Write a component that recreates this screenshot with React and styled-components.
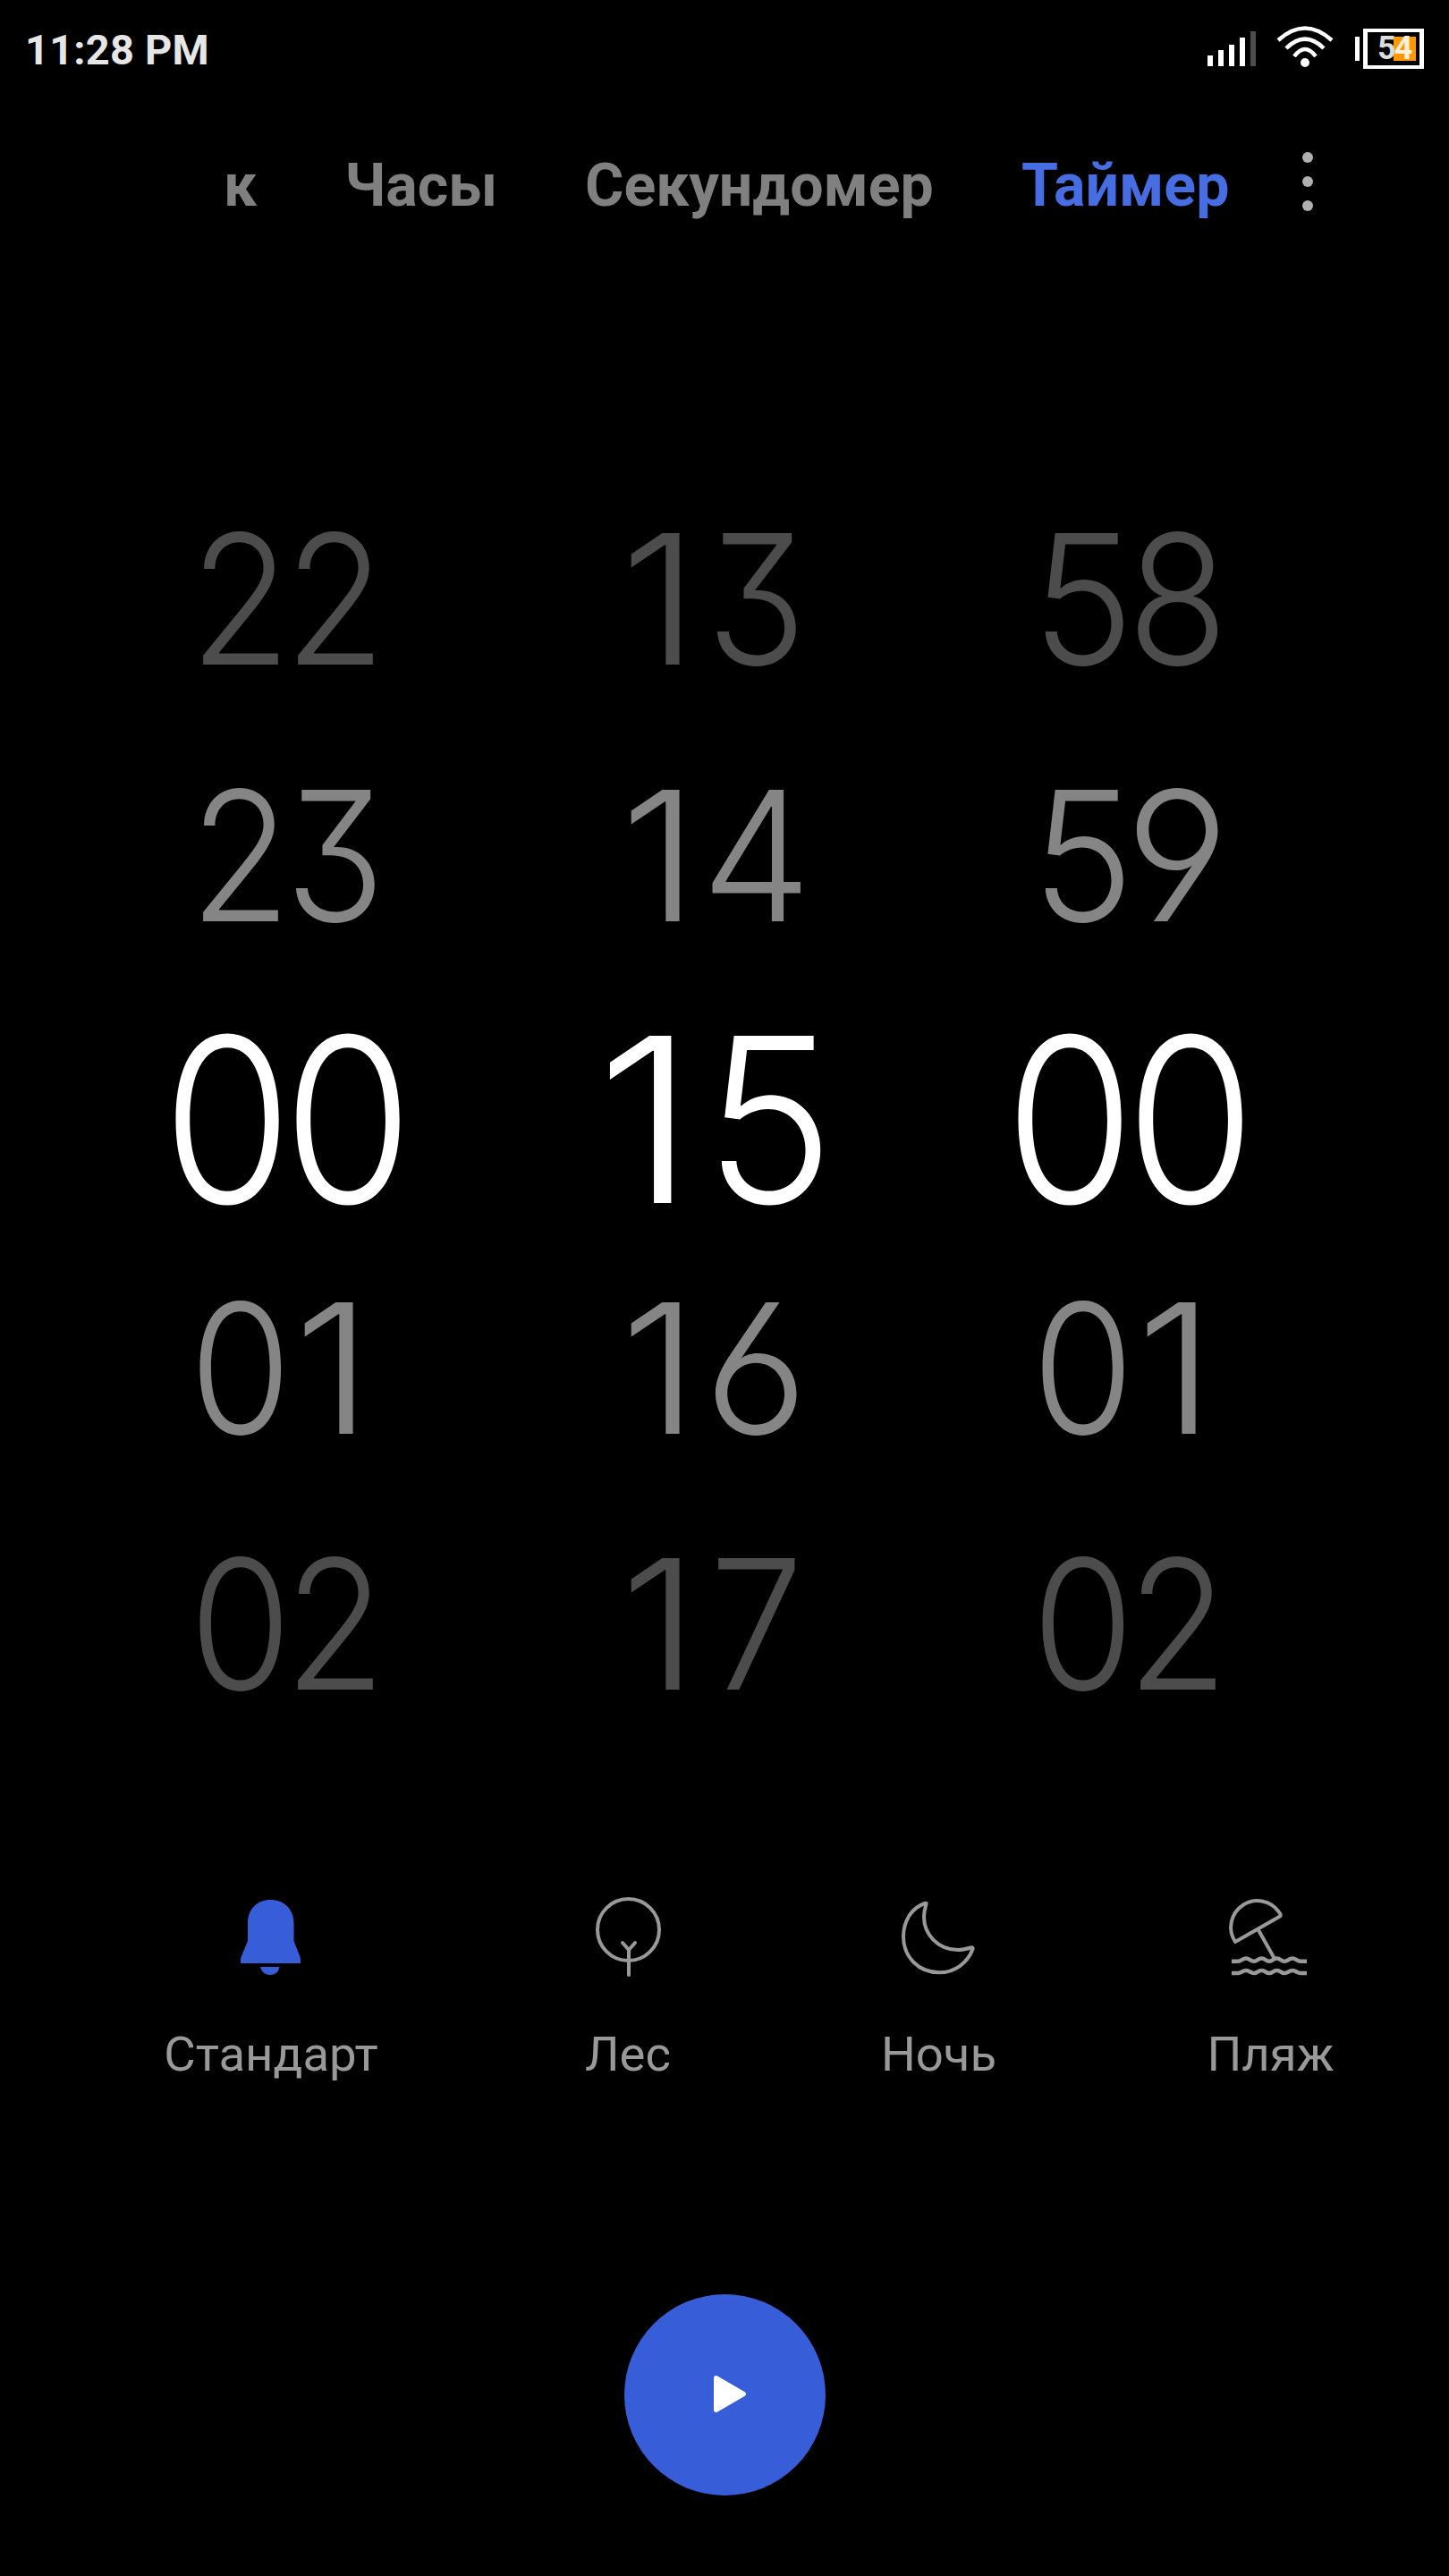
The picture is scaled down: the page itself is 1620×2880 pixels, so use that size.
import React from "react";
import styled, { createGlobalStyle } from "styled-components";

const GlobalStyle = createGlobalStyle`
  * { box-sizing: border-box; }
  body { margin: 0; background: #000; }
`;

const Screen = styled.main`
  display: flex;
  flex-direction: column;
  width: 1620px;
  height: 2880px;
  overflow: hidden;
  background: #000;
  font-family: Roboto, "Liberation Sans", sans-serif;
`;

const StatusBar = styled.header`
  display: flex;
  align-items: flex-start;
  justify-content: space-between;
  height: 110px;
  padding: 0 28px;
`;

const Clock = styled.time`
  font-size: 47px;
  font-weight: 700;
  line-height: 111px;
  letter-spacing: 0.2px;
  color: #e6e6e6;
  white-space: nowrap;
`;

const StatusIcons = styled.div`
  display: flex;
  align-items: center;
  height: 109px;
`;

const Signal = styled.div`
  display: flex;
  align-items: flex-end;
  gap: 6px;
  height: 39px;
  margin-right: 23px;
`;

const SignalBar = styled.i`
  width: 6px;
  height: ${(p) => p.$height}px;
  background: ${(p) => (p.$on ? "#fff" : "#4d4d4d")};
`;

const WifiSvg = styled.svg`
  width: 64px;
  height: 49px;
  margin-right: 24px;
  overflow: visible;
`;

const BatteryNub = styled.i`
  width: 5px;
  height: 27px;
  margin-right: 4px;
  background: #fff;
`;

const BatteryBody = styled.div`
  display: flex;
  align-items: center;
  justify-content: flex-end;
  width: 68px;
  height: 45px;
  padding-right: 4px;
  border: solid #fff;
  border-width: 4px 5px;
`;

const BatteryLevel = styled.div`
  display: flex;
  align-items: center;
  width: 45px;
  height: 27px;
  padding-left: 2px;
  background: linear-gradient(90deg, transparent 20px, #ff9800 20px);
  font-size: 36px;
  font-weight: 700;
  line-height: 27px;
  color: #fdeedd;
  letter-spacing: -2px;
`;

const FirstDigit = styled.span`
  color: #dcdcdc;
`;

const TabBar = styled.nav`
  display: flex;
  align-items: center;
  height: 190px;
  padding: 5px 0 0 250px;
`;

const Tab = styled.a`
  margin-right: ${(p) => (p.$active ? 81.5 : 98)}px;
  font-size: 66.25px;
  font-weight: 700;
  line-height: 80px;
  color: ${(p) => (p.$active ? "#476de3" : "#808080")};
`;

const MenuSvg = styled.svg`
  width: 12px;
  height: 68px;
  margin-bottom: 9px;
`;

const Picker = styled.section`
  display: grid;
  grid-template-columns: repeat(3, 471px);
  height: 1432px;
  margin: 227px 0 0 86px;
`;

const Wheel = styled.div`
  display: grid;
  grid-template-rows: repeat(5, 286.5px);
`;

const Value = styled.div`
  display: flex;
  align-items: center;
  justify-content: center;
  padding-top: ${(p) => (p.$level === 0 ? 16 : 0)}px;
  font-family: Inter, Roboto, sans-serif;
  font-size: ${(p) => (p.$level === 0 ? 257 : 202)}px;
  font-weight: 300;
  font-feature-settings: "cv03", "cv04", "cv09";
  line-height: 1;
  color: ${(p) => ["#fff", "#858585", "#4c4c4c"][p.$level]};
`;

const Digit = styled.span`
  display: flex;
  justify-content: center;
  width: 0.522em;
  transform: translateX(${(p) => p.$shift}em) scaleX(${(p) => p.$stretch});
`;

const Sounds = styled.section`
  display: flex;
  height: 240px;
  margin: 156px 0 0 103px;
`;

const Sound = styled.div`
  display: flex;
  flex-direction: column;
  flex-shrink: 0;
  align-items: center;
  width: ${(p) => p.$width}px;
`;

const SoundSvg = styled.svg`
  width: 100px;
  height: 100px;
  fill: none;
  stroke: #999;
  stroke-width: 4;
  stroke-linecap: round;
  stroke-linejoin: round;
`;

const SoundName = styled.span`
  margin-top: 49px;
  font-size: 54.5px;
  line-height: 64px;
  color: #999;
`;

const Controls = styled.footer`
  display: flex;
  justify-content: center;
  margin-top: 210px;
`;

const PlayButton = styled.button`
  width: 225px;
  height: 225px;
  padding: 0;
  border: 0;
  border-radius: 50%;
  background: #385dd8;
`;

const digitStretch = { 0: 0.915, 1: 1.1, 4: 0.97, 5: 0.955, 6: 1.0, 7: 0.93, 8: 0.91, 9: 1.0 };
const digitShift = { 1: -0.012 };

const wheels = [
  ["22", "23", "00", "01", "02"],
  ["13", "14", "15", "16", "17"],
  ["58", "59", "00", "01", "02"],
];

const sounds = [
  {
    name: "Стандарт",
    width: 400,
    art: (
      <g fill="#385dd8" stroke="none">
        <path d="M24 50C24 34 35 24 49.500 24S75.500 34 75.500 50V70L82.500 88Q83.500 91 83 95H16Q15.500 91 16.500 88L24 70Z" />
        <path d="M38 99H59.500C58.500 105 54 108 49 108S39.500 105 38 99Z" />
      </g>
    ),
  },
  {
    name: "Лес",
    width: 398,
    art: (
      <g>
        <circle cx="50.500" cy="57.500" r="34.500" />
        <path d="M51 108V80M44 72L51 80L58 72" />
      </g>
    ),
  },
  {
    name: "Ночь",
    width: 297,
    art: <path d="M34 28C19 33 10 48 10 65C10 88 27 105.300 50 105.300C68 105.300 82 94 87.500 79C88 77.500 87 77 85 77.500C80 79 76 80 71 80C48 80 33 62 33 43C33 38 34 34 35.300 29.500C36 27.500 35.500 27.500 34 28Z" />,
  },
  {
    name: "Пляж",
    width: 445,
    art: (
      <g>
        <path d="M10 71A29.600 29.600 0 0 1 59.500 38.500Q61.500 41 60 42.500ZM35.500 57L54 90" />
        <path
          strokeLinecap="butt"
          strokeWidth="4.500"
          d="M6 92.800H13C17 92.800 18 89.500 22 89.500S27 92.800 31 92.800S35 89.500 39.500 89.500S44 92.800 48 92.800S52 89.500 56.500 89.500S61 92.800 65 92.800S70 89.500 74 89.500S79 92.800 83 92.800H90M6 106H13C17 106 18 103 22 103S27 106 31 106S35 103 39.500 103S44 106 48 106S52 103 56.500 103S61 106 65 106S70 103 74 103S79 106 83 106H90"
        />
      </g>
    ),
  },
];

export default function App() {
  return (
    <Screen>
      <GlobalStyle />
      <StatusBar>
        <Clock>11:28 PM</Clock>
        <StatusIcons>
          <Signal>
            {[12, 18, 24, 32, 39].map((h, i) => (
              <SignalBar key={h} $height={h} $on={i < 4} />
            ))}
          </Signal>
          <WifiSvg viewBox="0 0 64 49" fill="none" stroke="#fff" strokeWidth="4.500">
            <path d="M2 15Q32 -12 62 15M11 24Q32 3 53 24M20 33Q32 17 44 33" />
            <circle cx="32" cy="40" r="5" fill="#fff" stroke="none" />
          </WifiSvg>
          <BatteryNub />
          <BatteryBody>
            <BatteryLevel>
              <FirstDigit>5</FirstDigit>4
            </BatteryLevel>
          </BatteryBody>
        </StatusIcons>
      </StatusBar>
      <TabBar>
        <Tab>к</Tab>
        <Tab>Часы</Tab>
        <Tab>Секундомер</Tab>
        <Tab $active>Таймер</Tab>
        <MenuSvg viewBox="0 0 12 68" fill="#b0b0b0">
          <circle cx="6" cy="7" r="6" />
          <circle cx="6" cy="34" r="6" />
          <circle cx="6" cy="61" r="6" />
        </MenuSvg>
      </TabBar>
      <Picker>
        {wheels.map((values, w) => (
          <Wheel key={w}>
            {values.map((value, i) => (
              <Value key={value} $level={Math.abs(i - 2)}>
                {value.split("").map((digit, d) => (
                  <Digit
                    key={d}
                    $stretch={digitStretch[digit] ?? 0.91}
                    $shift={digitShift[digit] ?? 0}
                  >
                    {digit}
                  </Digit>
                ))}
              </Value>
            ))}
          </Wheel>
        ))}
      </Picker>
      <Sounds>
        {sounds.map((sound) => (
          <Sound key={sound.name} $width={sound.width}>
            <SoundSvg viewBox="0 15 100 100">{sound.art}</SoundSvg>
            <SoundName>{sound.name}</SoundName>
          </Sound>
        ))}
      </Sounds>
      <Controls>
        <PlayButton aria-label="Старт">
          <svg width="225" height="225" viewBox="0 0 225 225">
            <path
              d="M102.500 93.500L133.500 111.500L102.500 129.500Z"
              fill="#fff"
              stroke="#fff"
              strokeWidth="5"
              strokeLinejoin="round"
            />
          </svg>
        </PlayButton>
      </Controls>
    </Screen>
  );
}
